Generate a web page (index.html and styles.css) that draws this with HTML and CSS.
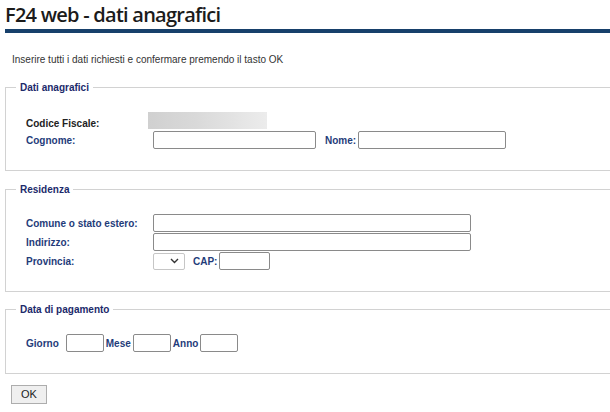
FILE: index.html
```html
<!DOCTYPE html>
<html lang="it">
<head>
	<meta charset="UTF-8">
	<title>F24 web - dati anagrafici</title>
	<link rel="stylesheet" href="styles.css">
</head>
<body>
<h1 class="titolo">F24 web - dati anagrafici</h1>
<p class="istruzioni">Inserire tutti i dati richiesti e confermare premendo il tasto OK</p>
<form class="modulo">
	<fieldset class="gruppo">
		<legend>Dati anagrafici</legend>
		<div class="righe">
			<div class="riga">
				<span class="etichetta nero">Codice Fiscale:</span>
				<span class="oscurato"></span>
			</div>
			<div class="riga">
				<label class="etichetta">Cognome:</label>
				<input type="text" class="campo cognome">
				<label class="etichetta-inline nome-lbl">Nome:</label>
				<input type="text" class="campo nome">
			</div>
		</div>
	</fieldset>
	<fieldset class="gruppo">
		<legend>Residenza</legend>
		<div class="righe">
			<div class="riga">
				<label class="etichetta">Comune o stato estero:</label>
				<input type="text" class="campo lungo">
			</div>
			<div class="riga">
				<label class="etichetta">Indirizzo:</label>
				<input type="text" class="campo lungo">
			</div>
			<div class="riga">
				<label class="etichetta">Provincia:</label>
				<span class="scelta">
					<svg width="9" height="6" viewBox="0 0 9 6"><path d="M1 1l3.5 3.5L8 1" fill="none" stroke="#333" stroke-width="1.4"/></svg>
				</span>
				<label class="etichetta-inline cap-lbl">CAP:</label>
				<input type="text" class="campo cap">
			</div>
		</div>
	</fieldset>
	<fieldset class="gruppo">
		<legend>Data di pagamento</legend>
		<div class="righe">
			<div class="riga data">
				<label class="etichetta-inline giorno-lbl">Giorno</label>
				<input type="text" class="campo breve">
				<label class="etichetta-inline">Mese</label>
				<input type="text" class="campo breve">
				<label class="etichetta-inline">Anno</label>
				<input type="text" class="campo breve">
			</div>
		</div>
	</fieldset>
	<button type="button" class="bottone">OK</button>
</form>
</body>
</html>
```

FILE: styles.css
```css
body {
	margin: 0;
	font-family: "Liberation Sans", Arial, sans-serif;
	color: #222;
	background: #fff;
}
.titolo {
	margin: 0 0 0 5px;
	height: 29px;
	line-height: 29px;
	font-family: "Open Sans", sans-serif;
	font-weight: 600;
	font-size: 20px;
	letter-spacing: -0.75px;
	color: #1b1b1b;
	border-bottom: 4px solid #17406b;
}
.istruzioni {
	margin: 21px 0 0 12px;
	font-size: 10px;
	line-height: 12px;
	color: #333;
}
.modulo {
	margin: 15px 0 0 5px;
}
.gruppo {
	margin: 0 -20px 11px 0;
	padding: 0 0 21px 10px;
	border: 1px solid #d2d2d2;
}
.gruppo:first-of-type {
	margin-bottom: 12px;
}
.gruppo:last-of-type {
	margin-bottom: 10px;
}
.gruppo legend {
	padding: 0 4px;
	font-size: 10px;
	font-weight: bold;
	line-height: 13px;
	color: #1c2a6b;
}
.righe {
	padding: 18px 0 0 10px;
	display: flex;
	flex-direction: column;
	gap: 1px;
}
.riga {
	display: flex;
	align-items: center;
	height: 18px;
}
.etichetta {
	width: 127px;
	flex: none;
	font-size: 10px;
	font-weight: bold;
	color: #1f3c7a;
}
.etichetta.nero {
	color: #222;
	padding-top: 5px;
}
.etichetta-inline {
	font-size: 10px;
	font-weight: bold;
	color: #1f3c7a;
	margin: 0 2px 0 2px;
}
.oscurato {
	width: 119px;
	height: 17px;
	margin-left: -5px;
	margin-top: -2px;
	background: linear-gradient(to right, #d0d0d0, #d9d9d9 40%, #ececec);
}
.campo {
	box-sizing: border-box;
	height: 18px;
	padding: 0 2px;
	border: 1px solid #8a8a8a;
	border-radius: 2px;
	background: #fff;
	font-size: 11px;
}
.cognome {
	width: 163px;
}
.nome-lbl {
	margin-left: 9px;
	margin-right: 2px;
}
.nome {
	width: 148px;
}
.lungo {
	width: 318px;
}
.scelta {
	box-sizing: border-box;
	width: 32px;
	height: 17px;
	display: flex;
	align-items: center;
	justify-content: flex-end;
	padding-right: 5px;
	border: 1px solid #c6c6c6;
	border-radius: 2px;
}
.cap-lbl {
	margin-left: 8px;
}
.cap {
	width: 51px;
}
.giorno-lbl {
	margin: 0 7px 0 0;
}
.breve {
	width: 38px;
}
.bottone {
	margin-left: 6px;
	width: 36px;
	height: 19px;
	padding: 0;
	border: 1px solid #adadad;
	background: #efefef;
	font-family: "Liberation Sans", Arial, sans-serif;
	font-size: 11px;
	color: #222;
}
```
